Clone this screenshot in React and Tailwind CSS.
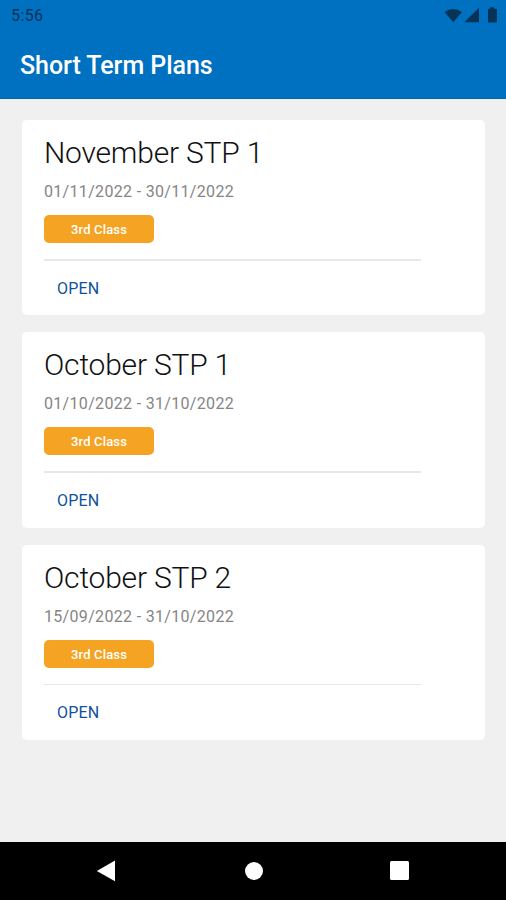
const plans = [
  { title: "November STP 1", dates: "01/11/2022 - 30/11/2022", group: "3rd Class" },
  { title: "October STP 1", dates: "01/10/2022 - 31/10/2022", group: "3rd Class" },
  { title: "October STP 2", dates: "15/09/2022 - 31/10/2022", group: "3rd Class" },
];

function StatusIcons() {
  return (
    <svg className="h-[20px] w-[56px] text-[#053457]" viewBox="0 0 56 20" fill="currentColor" aria-hidden="true">
      <path d="M1.5 7Q10.2 .9 19 7L10.3 17.3Z" />
      <path d="M36 2.8V17.3H21.3Z" />
      <path d="M45 3.8H47V2.3H51V3.8H53Q54 3.8 54 4.8V16.4Q54 17.4 53 17.4H46Q45 17.4 45 16.4V4.8Q45 3.8 46 3.8Z" />
    </svg>
  );
}

function PlanCard({ title, dates, group }) {
  return (
    <article className="h-[195.4px] rounded-[5px] bg-white pl-[22px] pt-[15px]">
      <h2 className="h-[36px] whitespace-nowrap text-[30px] font-light leading-[36px] tracking-[-0.2px] text-[#111111]">{title}</h2>
      <p className="mt-[11px] h-5 whitespace-nowrap text-[16px] leading-5 tracking-[0.32px] text-[#858585]">{dates}</p>
      <div className="mt-[13px] flex h-[28px] w-[110px] items-center justify-center rounded-[5px] bg-[#f5a323] pb-px pt-[2px] text-[13px] font-medium text-white">
        <span className="tracking-[0.15px]">{group}</span>
      </div>
      <div className="mt-[16px] h-[1.5px] w-[377px] bg-[#e8e8e8]" />
      <button className="mt-[16px] block h-6 px-[13px] text-[16px] leading-6 tracking-[0.2px] text-[#0f519f]">OPEN</button>
    </article>
  );
}

export default function App() {
  return (
    <div className="flex h-[900px] w-[506px] flex-col overflow-hidden bg-[#f0f0f0] font-['Roboto',sans-serif]">
      <header className="h-[98.5px] shrink-0 border-b border-[#0863b3] bg-[#0070c0]">
        <div className="flex h-[32px] items-start justify-between pl-[11px] pr-[7px] pt-[5px]">
          <span className="text-[16px] leading-[22px] tracking-[0.4px] text-[#053457]">5:56</span>
          <StatusIcons />
        </div>
        <h1 className="pl-[20px] pt-[18px] text-[25px] font-medium leading-[32px] tracking-[-0.06px] text-white">Short Term Plans</h1>
      </header>
      <main className="flex min-h-0 flex-1 flex-col gap-[17px] pl-[22px] pr-[21px] pt-[21.5px]">
        {plans.map((plan) => (
          <PlanCard key={plan.title} {...plan} />
        ))}
      </main>
      <nav className="flex h-[58.5px] shrink-0 items-center bg-black pl-[96px]">
        <svg className="h-[22px] w-[20px]" viewBox="0 0 20 22" fill="white" aria-hidden="true">
          <path d="M19 .5V21.3L.8 11Z" />
        </svg>
        <span className="ml-[128.5px] size-[18px] rounded-full bg-white" />
        <span className="ml-[127px] size-[19px] rounded-[1.5px] bg-white" />
      </nav>
    </div>
  );
}
